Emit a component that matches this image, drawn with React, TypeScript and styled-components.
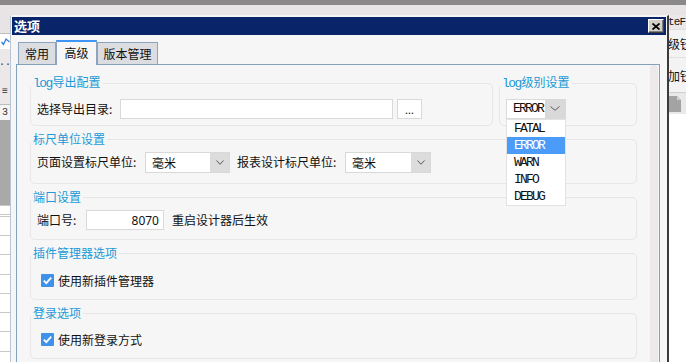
import React from 'react';
import styled, { createGlobalStyle } from 'styled-components';

const CJK = `"Noto Sans CJK SC", "Noto Sans", sans-serif`;
const MONO = `"Liberation Mono", "Noto Sans CJK SC", monospace`;

const GlobalStyle = createGlobalStyle`
  html, body {
    margin: 0;
    padding: 0;
  }
  body {
    width: 686px;
    height: 362px;
    overflow: hidden;
    font-family: ${CJK};
    font-size: 12px;
    color: #1a1a1a;
  }
`;

// ---- application behind the dialog ----
const Screen = styled.div`
  position: relative;
  width: 686px;
  height: 362px;
  overflow: hidden;
  display: flex;
  flex-direction: column;
  background: #f6f6f6;
`;

const TopBar = styled.div`
  height: 5px;
  flex-shrink: 0;
  background: #8a8889;
`;

const MenuStrip = styled.div`
  height: 10px;
  flex-shrink: 0;
  background: #e8e4e6;
`;

const Workspace = styled.div`
  flex: 1;
  display: flex;
  min-height: 0;
`;

const LeftDock = styled.div`
  width: 10px;
  display: flex;
  flex-direction: column;
  overflow: hidden;
  background: #e9e5e7;
`;

const DockBlock = styled.div<{ $h: number; $bg: string; $line?: boolean }>`
  height: ${p => p.$h}px;
  flex-shrink: 0;
  box-sizing: border-box;
  background: ${p => p.$bg};
  border-top: ${p => (p.$line ? '1px solid #bdbdbd' : 'none')};
  display: flex;
  align-items: center;
  justify-content: center;
  font-family: ${MONO};
  font-size: 10px;
  color: #333;
  overflow: hidden;
`;

const SheetGrid = styled.div`
  flex: 1;
  border-top: 1px solid #c6c6c6;
  background: repeating-linear-gradient(to bottom, #c9c9c9 0 1px, #ffffff 1px 19.25px);
  background-position: 0 10px;
`;

const Center = styled.div`
  flex: 1;
`;

const RightDock = styled.div`
  width: 18px;
  display: flex;
  flex-direction: column;
  overflow: hidden;
  background: #ffffff;
`;

const DockCaption = styled.div`
  height: 14px;
  flex-shrink: 0;
  background: #ece8ea;
  font-family: ${MONO};
  font-size: 11px;
  line-height: 14px;
  letter-spacing: -0.8px;
  white-space: nowrap;
  color: #111;
`;

const DockItem = styled.div<{ $h: number }>`
  height: ${p => p.$h}px;
  flex-shrink: 0;
  box-sizing: border-box;
  background: #f3f3f3;
  border-top: 1px solid #e0e0e0;
  display: flex;
  align-items: center;
  white-space: nowrap;
  font-size: 12px;
  color: #111;
`;

const DockTools = styled.div`
  height: 22px;
  flex-shrink: 0;
  box-sizing: border-box;
  border-top: 1px solid #cfcfcf;
  background: #e9e9e9;
  display: flex;
  align-items: center;
  padding-left: 1px;
`;

// ---- dialog window ----
const Dialog = styled.div`
  position: absolute;
  left: 10px;
  top: 15px;
  width: 659px;
  height: 360px;
  box-sizing: border-box;
  border-style: solid;
  border-width: 1px 2px 1px 1px;
  border-color: #f4f4f4 #3a3a3a #3a3a3a #b9c5d3;
  padding: 1px;
  background: #f6f6f6;
  display: flex;
  flex-direction: column;
`;

const TitleBar = styled.div`
  height: 18px;
  flex-shrink: 0;
  background: #0a246a;
  display: flex;
  align-items: center;
  justify-content: space-between;
  padding: 0 2px 0 2px;
`;

const Title = styled.span`
  color: #ffffff;
  font-weight: bold;
  font-size: 13px;
  line-height: 18px;
`;

const CloseButton = styled.button`
  width: 16px;
  height: 14px;
  padding: 0;
  box-sizing: border-box;
  background: #d4d0c8;
  border: 1px solid;
  border-color: #ffffff #404040 #404040 #ffffff;
  box-shadow: inset -1px -1px 0 #808080;
  display: flex;
  align-items: center;
  justify-content: center;
`;

const DialogBody = styled.div`
  flex: 1;
  min-height: 0;
  display: flex;
  flex-direction: column;
  padding: 0 6px 0 4px;
`;

const TabStrip = styled.div`
  height: 29px;
  flex-shrink: 0;
  display: flex;
  align-items: flex-end;
  padding-left: 2px;
`;

const Tab = styled.div<{ $active?: boolean; $w: number }>`
  width: ${p => p.$w}px;
  height: ${p => (p.$active ? 25 : 22)}px;
  margin-bottom: ${p => (p.$active ? -1 : 0)}px;
  box-sizing: border-box;
  position: relative;
  z-index: ${p => (p.$active ? 1 : 0)};
  border: 1px solid #8ea3bd;
  border-bottom: none;
  border-top: ${p => (p.$active ? '2px solid #3d95f6' : '1px solid #8ea3bd')};
  background: ${p => (p.$active ? '#f6f6f6' : '#dcdde1')};
  padding-bottom: ${p => (p.$active ? 2 : 0)}px;
  display: flex;
  align-items: center;
  justify-content: center;
  font-size: 12px;
  color: #111;
`;

const Panel = styled.div`
  flex: 1;
  min-height: 0;
  display: flex;
  border: 1px solid #84a0bf;
  border-bottom: none;
  background: #f6f6f6;
`;

const PanelContent = styled.div`
  flex: 1;
  display: flex;
  flex-direction: column;
  gap: 5px;
  padding: 9px 13px 0 13px;
`;

const ScrollTrack = styled.div`
  width: 8px;
  margin-right: 1px;
  background: #ece8ec;
  border-radius: 4px 4px 0 0;
`;

const SplitRow = styled.div`
  display: grid;
  grid-template-columns: 1fr 138px;
  gap: 6px;
`;

const Group = styled.fieldset`
  margin: 0;
  padding: 0;
  min-width: 0;
  border: 1px solid #e6e6e6;
  border-radius: 5px;
`;

const GroupTitle = styled.legend`
  padding: 0 2px;
  margin: 0;
  font-size: 12px;
  line-height: 16px;
  color: #1b9ad6;
`;

const Mono = styled.span`
  font-family: ${MONO};
  font-size: 13px;
  letter-spacing: -1.6px;
  margin-right: 1px;
`;

const Row = styled.div<{ $h: number; $pb?: number }>`
  height: ${p => p.$h}px;
  margin-bottom: ${p => p.$pb ?? 0}px;
  padding: 0 6px;
  display: flex;
  align-items: center;
  position: relative;
`;

const Label = styled.span<{ $w?: number; $ml?: number }>`
  width: ${p => (p.$w ? `${p.$w}px` : 'auto')};
  margin-left: ${p => p.$ml ?? 0}px;
  flex-shrink: 0;
  font-size: 12px;
  line-height: 16px;
  color: #111;
  white-space: nowrap;
`;

const TextField = styled.input<{ $w: number; $right?: boolean }>`
  width: ${p => p.$w}px;
  height: 20px;
  box-sizing: border-box;
  margin: 0;
  border: 1px solid #d9d9d9;
  background: #ffffff;
  padding: 0 4px;
  font-family: "Noto Sans", ${CJK};
  font-size: 12px;
  color: #111;
  text-align: ${p => (p.$right ? 'right' : 'left')};
  outline: none;
`;

const BrowseButton = styled.button`
  width: 25px;
  height: 20px;
  margin-left: 4px;
  box-sizing: border-box;
  padding: 0 0 3px;
  border: 1px solid #d9d9d9;
  background: #ffffff;
  font-family: "Noto Sans", sans-serif;
  font-size: 11px;
  line-height: 1;
  display: flex;
  align-items: flex-end;
  justify-content: center;
  color: #111;
`;

const Select = styled.div<{ $w: number }>`
  width: ${p => p.$w}px;
  height: 21px;
  box-sizing: border-box;
  display: flex;
  border: 1px solid #d9d9d9;
  background: #ffffff;
`;

const SelectValue = styled.span`
  flex: 1;
  padding-left: 6px;
  font-size: 12px;
  line-height: 19px;
  color: #111;
`;

const SelectArrow = styled.span`
  width: 19px;
  background: #dcdcdc;
  display: flex;
  align-items: center;
  justify-content: center;
`;

const LevelCombo = styled.div`
  position: relative;
  width: 60px;
  height: 20px;
  box-sizing: border-box;
  display: flex;
  border: 1px solid #dadada;
  background: #ffffff;
`;

const LevelValue = styled.span`
  flex: 1;
  padding-left: 6px;
  font-family: ${MONO};
  font-size: 13px;
  letter-spacing: -1.8px;
  line-height: 18px;
  color: #111;
`;

const LevelArrow = styled.span`
  width: 20px;
  background: #d9d9d9;
  display: flex;
  align-items: center;
  justify-content: center;
`;

const LevelList = styled.ul`
  position: absolute;
  top: 19px;
  left: -1px;
  width: 60px;
  margin: 0;
  padding: 0;
  list-style: none;
  box-sizing: border-box;
  border: 1px solid #e2e2e2;
  background: #ffffff;
  z-index: 5;
`;

const LevelOption = styled.li<{ $selected?: boolean }>`
  height: 17px;
  padding-left: 7px;
  font-family: ${MONO};
  font-size: 13px;
  letter-spacing: -1.8px;
  line-height: 17px;
  background: ${p => (p.$selected ? '#4a9cf8' : 'transparent')};
  color: ${p => (p.$selected ? '#ffffff' : '#111111')};
`;

const CheckLabel = styled.label`
  display: flex;
  align-items: center;
  gap: 4px;
  margin-left: 4px;
  font-size: 12px;
  color: #111;
`;

const Chevron = ({ w = 8 }: { w?: number }) => (
  <svg width={w} height="5" viewBox={`0 0 ${w} 5`}>
    <path d={`M0.5 0.5 L${w / 2} 4.3 L${w - 0.5} 0.5`} fill="none" stroke="#5a5a5a" strokeWidth="1" />
  </svg>
);

const CheckBox = () => (
  <svg width="13" height="13" viewBox="0 0 13 13">
    <rect width="13" height="13" rx="1" fill="#3f92ea" />
    <path d="M2.8 6.6 L5.3 9.1 L10.2 3.6" fill="none" stroke="#ffffff" strokeWidth="1.8" />
  </svg>
);

const CloseGlyph = () => (
  <svg width="8" height="7" viewBox="0 0 8 7">
    <path d="M0.5 0.5 L7.5 6.5 M7.5 0.5 L0.5 6.5" stroke="#000" strokeWidth="1.7" />
  </svg>
);

const DocIcon = () => (
  <svg width="12" height="16" viewBox="0 0 12 16">
    <path d="M0 0 H8 L12 4 V16 H0 Z" fill="#a3a3a3" />
    <path d="M8 0 V4 H12" fill="#d0d0d0" />
  </svg>
);

const TickIcon = () => (
  <svg width="9" height="9" viewBox="0 0 9 9">
    <path d="M0.5 5 L2.5 7.5 L5 2 L8.5 5" fill="none" stroke="#2f7fdc" strokeWidth="1.3" />
  </svg>
);

const levels = ['FATAL', 'ERROR', 'WARN', 'INFO', 'DEBUG'];

export default function App() {
  return (
    <>
      <GlobalStyle />
      <Screen>
        <TopBar />
        <MenuStrip />
        <Workspace>
          <LeftDock>
            <DockBlock $h={18} $bg="#e8e4e6" />
            <DockBlock $h={16} $bg="#ffffff" $line>
              <TickIcon />
            </DockBlock>
            <DockBlock $h={30} $bg="#ece8ea">··</DockBlock>
            <DockBlock $h={25} $bg="#ece8ea">≡</DockBlock>
            <DockBlock $h={16} $bg="#f4f4f4" $line>3</DockBlock>
            <DockBlock $h={85} $bg="#a9a9a9" />
            <SheetGrid />
          </LeftDock>
          <Center />
          <RightDock>
            <DockCaption>teF</DockCaption>
            <DockItem $h={28}>级钮</DockItem>
            <DockItem $h={35}>加钮</DockItem>
            <DockTools>
              <DocIcon />
            </DockTools>
          </RightDock>
        </Workspace>

        <Dialog>
          <TitleBar>
            <Title>选项</Title>
            <CloseButton aria-label="close">
              <CloseGlyph />
            </CloseButton>
          </TitleBar>
          <DialogBody>
            <TabStrip>
              <Tab $w={38}>常用</Tab>
              <Tab $w={41} $active>高级</Tab>
              <Tab $w={61}>版本管理</Tab>
            </TabStrip>
            <Panel>
              <PanelContent>
                <SplitRow>
                  <Group>
                    <GroupTitle><Mono>log</Mono>导出配置</GroupTitle>
                    <Row $h={33}>
                      <Label $w={83}>选择导出目录:</Label>
                      <TextField $w={273} readOnly value="" />
                      <BrowseButton>...</BrowseButton>
                    </Row>
                  </Group>
                  <Group>
                    <GroupTitle><Mono>log</Mono>级别设置</GroupTitle>
                    <Row $h={33}>
                      <LevelCombo>
                        <LevelValue>ERROR</LevelValue>
                        <LevelArrow><Chevron w={10} /></LevelArrow>
                        <LevelList>
                          {levels.map(l => (
                            <LevelOption key={l} $selected={l === 'ERROR'}>{l}</LevelOption>
                          ))}
                        </LevelList>
                      </LevelCombo>
                    </Row>
                  </Group>
                </SplitRow>

                <Group>
                  <GroupTitle>标尺单位设置</GroupTitle>
                  <Row $h={30} $pb={6}>
                    <Label $w={108}>页面设置标尺单位:</Label>
                    <Select $w={85}>
                      <SelectValue>毫米</SelectValue>
                      <SelectArrow><Chevron /></SelectArrow>
                    </Select>
                    <Label $w={108} $ml={7}>报表设计标尺单位:</Label>
                    <Select $w={86}>
                      <SelectValue>毫米</SelectValue>
                      <SelectArrow><Chevron /></SelectArrow>
                    </Select>
                  </Row>
                </Group>

                <Group>
                  <GroupTitle>端口设置</GroupTitle>
                  <Row $h={30} $pb={4}>
                    <Label $w={49}>端口号:</Label>
                    <TextField $w={78} $right readOnly value="8070" />
                    <Label $ml={8}>重启设计器后生效</Label>
                  </Row>
                </Group>

                <Group>
                  <GroupTitle>插件管理器选项</GroupTitle>
                  <Row $h={38}>
                    <CheckLabel>
                      <CheckBox />
                      使用新插件管理器
                    </CheckLabel>
                  </Row>
                </Group>

                <Group>
                  <GroupTitle>登录选项</GroupTitle>
                  <Row $h={37}>
                    <CheckLabel>
                      <CheckBox />
                      使用新登录方式
                    </CheckLabel>
                  </Row>
                </Group>
              </PanelContent>
              <ScrollTrack />
            </Panel>
          </DialogBody>
        </Dialog>
      </Screen>
    </>
  );
}
